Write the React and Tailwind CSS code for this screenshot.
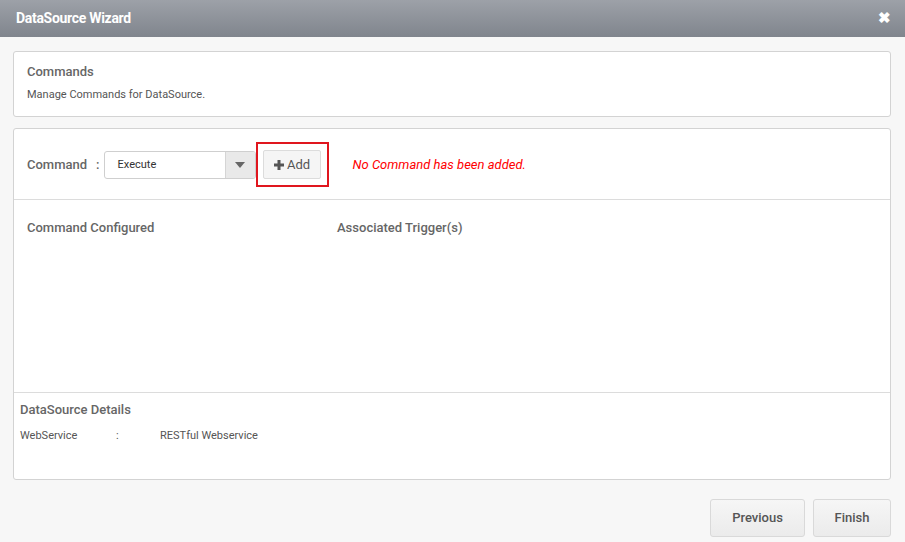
import React from "react";

export default function App() {
  return (
    <div className="w-[905px] h-[542px] bg-[#f7f7f7] flex flex-col overflow-hidden" style={{ fontFamily: "Roboto, 'Noto Sans', sans-serif" }}>
      <div className="h-[37px] shrink-0 bg-gradient-to-b from-[#9da1a8] to-[#80858d] flex items-center justify-between pl-4 pr-[14px]">
        <span className="text-white text-[14px] font-bold tracking-[-0.3px]">DataSource Wizard</span>
        <span className="text-white text-[15px] font-bold leading-none">✖</span>
      </div>
      <div className="flex flex-col pl-[13px] pr-[14px] pt-[14px]">
        <div className="h-[66px] bg-white border border-[#d3d3d3] rounded-[3px] px-[13px] pt-[12px]">
          <div className="text-[13px] font-medium text-[#666] leading-[16px]">Commands</div>
          <div className="text-[11px] text-[#555] mt-[8px] leading-[14px]">Manage Commands for DataSource.</div>
        </div>
        <div className="mt-[11px] h-[352px] bg-white border border-[#d3d3d3] rounded-[3px] flex flex-col">
          <div className="h-[71px] border-b border-[#dcdcdc] flex items-center pl-[13px] pt-[1px]">
            <span className="text-[13px] font-medium text-[#666]">Command</span>
            <span className="text-[13px] font-medium text-[#666] ml-[9px]">:</span>
            <div className="ml-[4px] w-[152px] h-[28px] border border-[#cfcfcf] rounded-[3px] flex overflow-hidden">
              <div className="flex-1 flex items-center pl-[13px] pt-[2px] text-[11px] text-[#333]">Execute</div>
              <div className="w-[30px] bg-[#e9e9e9] border-l border-[#d5d5d5] flex items-center justify-center">
                <svg width="10" height="6" viewBox="0 0 10 6"><path d="M0 0h10L5 6z" fill="#666" /></svg>
              </div>
            </div>
            <div className="ml-[0px] w-[73px] h-[45px] border-2 border-[#e0161e] flex items-center justify-center">
              <div className="w-[58px] h-[29px] bg-[#f5f5f5] border border-[#dcdcdc] rounded-[2px] flex items-center justify-center gap-[3px] pt-[1px] text-[13px] text-[#555]">
                <svg width="10" height="10" viewBox="0 0 10 10"><path d="M3.5 0h3v3.5H10v3H6.5V10h-3V6.5H0v-3h3.5z" fill="#555" /></svg>
                <span>Add</span>
              </div>
            </div>
            <span className="ml-[24px] text-[13px] italic text-[#f00]">No Command has been added.</span>
          </div>
          <div className="h-[193px] border-b border-[#dcdcdc] flex pl-[13px] pt-[20px]">
            <div className="w-[310px] text-[13px] font-medium text-[#666] leading-[16px]">Command Configured</div>
            <div className="text-[13px] font-medium text-[#666] leading-[16px]">Associated Trigger(s)</div>
          </div>
          <div className="pl-[6px] pt-[9px]">
            <div className="text-[13px] font-medium text-[#666] leading-[16px]">DataSource Details</div>
            <div className="flex text-[11px] text-[#555] mt-[11px] leading-[14px]">
              <span className="w-[96px]">WebService</span>
              <span className="w-[44px]">:</span>
              <span>RESTful Webservice</span>
            </div>
          </div>
        </div>
        <div className="flex justify-end gap-[8px] mt-[19px]">
          <button className="w-[95px] h-[38px] bg-gradient-to-b from-[#f6f6f6] to-[#ebebeb] border border-[#d9d9d9] rounded-[3px] text-[13px] font-medium text-[#555]">Previous</button>
          <button className="w-[78px] h-[38px] bg-gradient-to-b from-[#f6f6f6] to-[#ebebeb] border border-[#d9d9d9] rounded-[3px] text-[13px] font-medium text-[#555]">Finish</button>
        </div>
      </div>
    </div>
  );
}
